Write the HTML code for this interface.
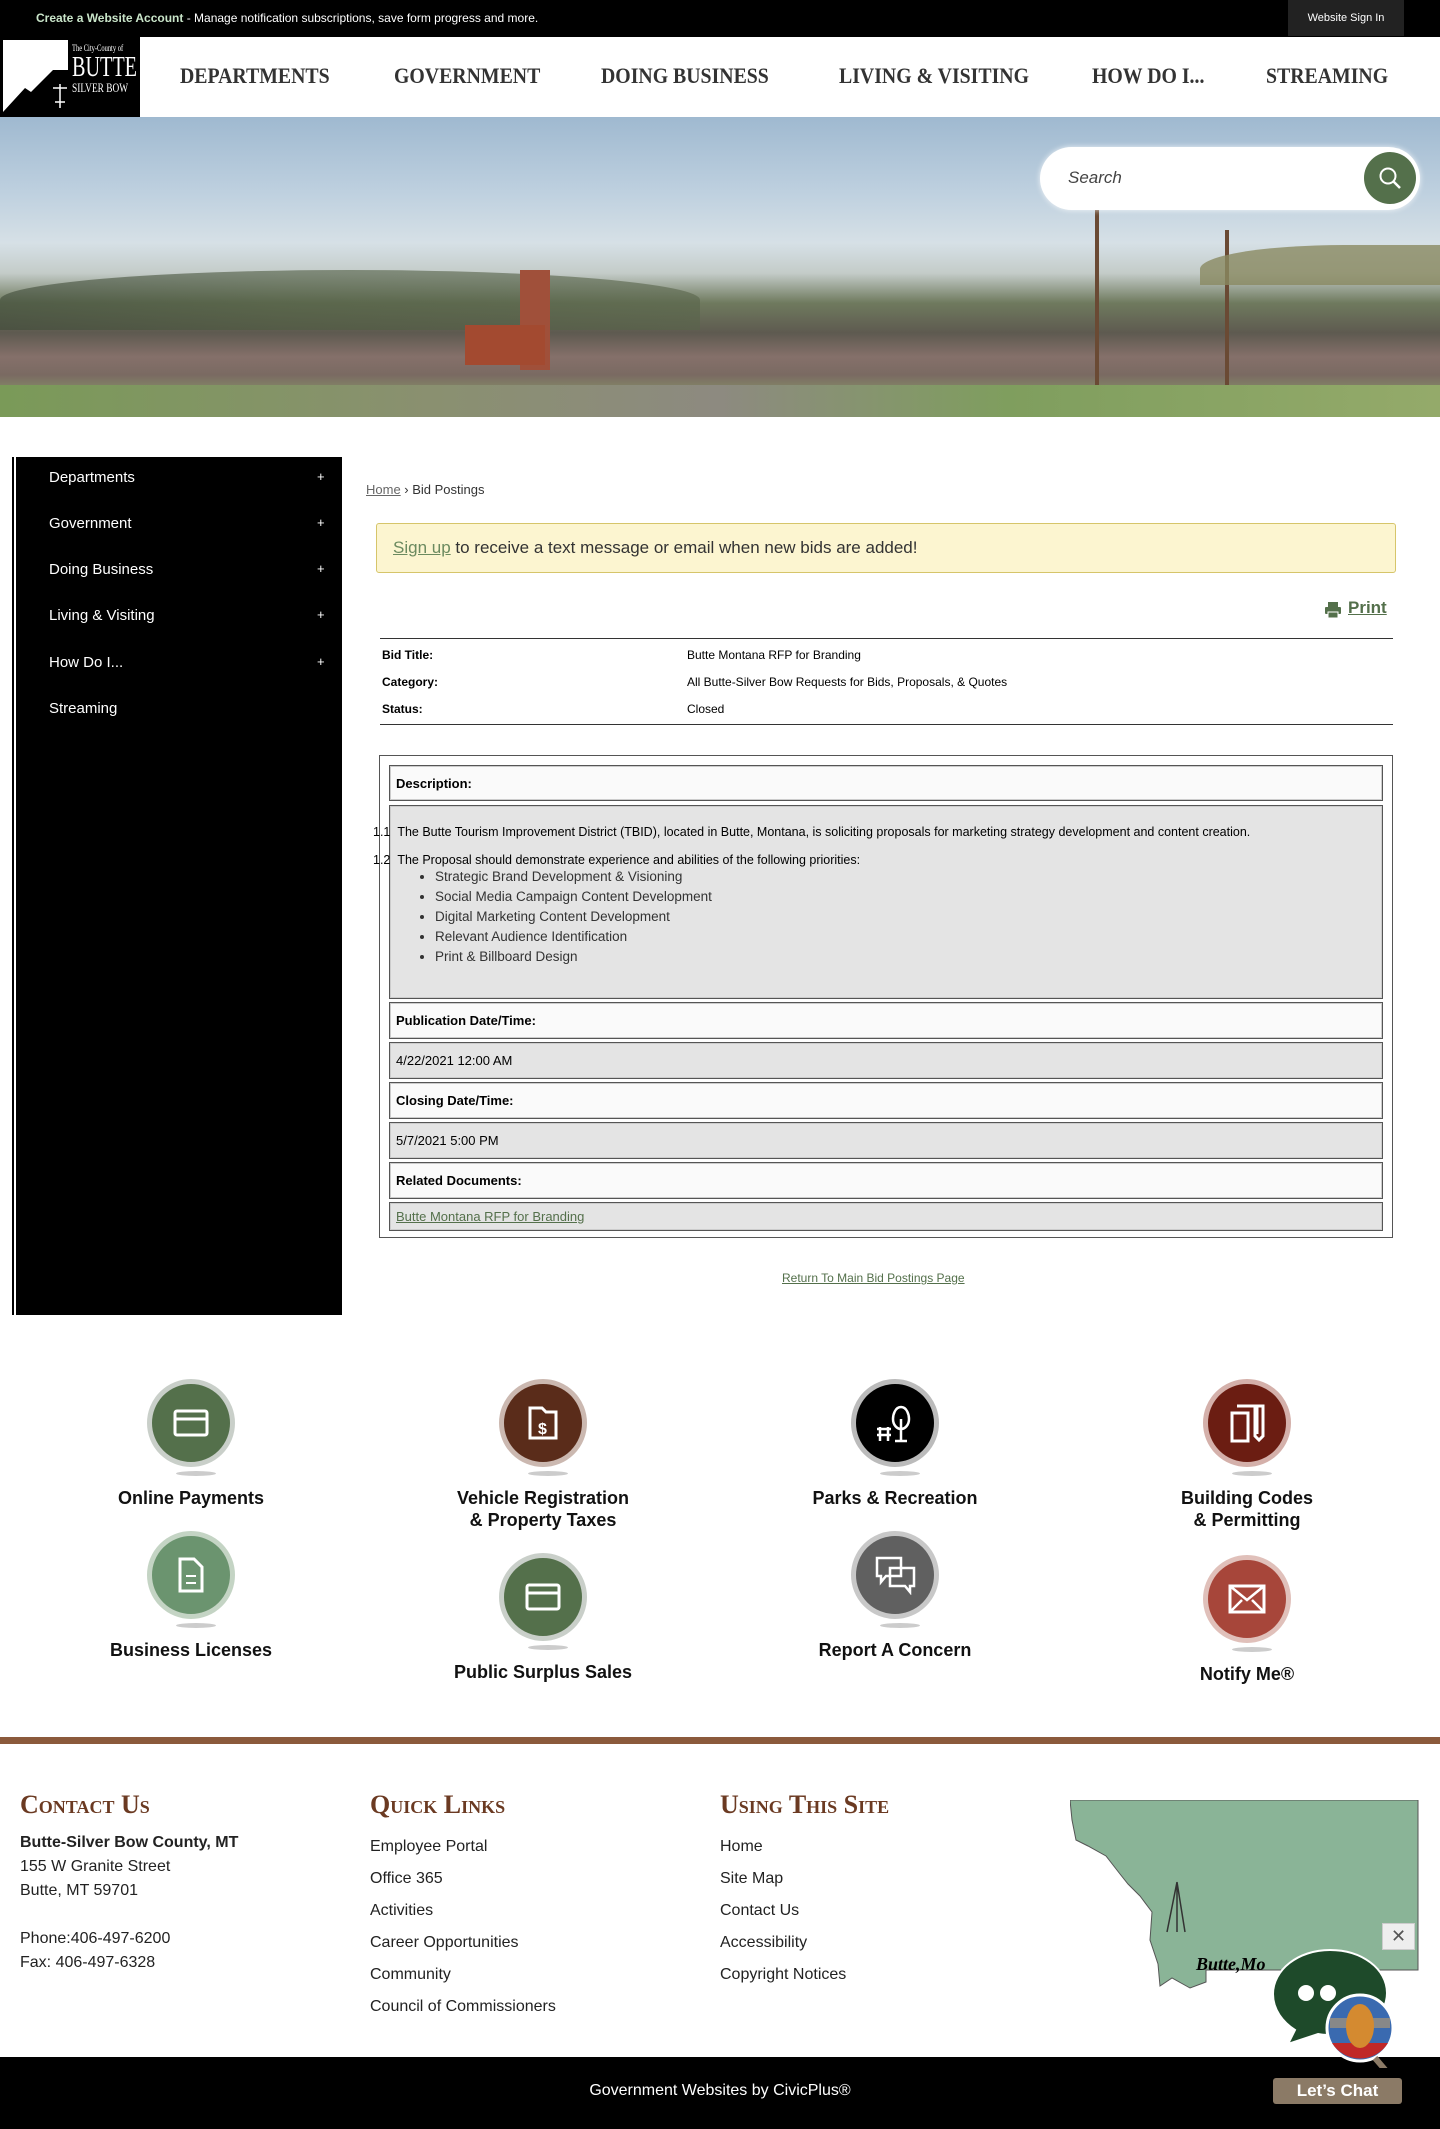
<!DOCTYPE html>
<html><head><meta charset="utf-8"><style>
*{margin:0;padding:0;box-sizing:border-box}
body{width:1440px;height:2129px;position:relative;font-family:"Liberation Sans",sans-serif;background:#fff;overflow:hidden;color:#000}
.a{position:absolute}
.nav{font-family:"Liberation Serif",serif;font-weight:bold;font-size:22px;color:#333;top:63px;transform:scaleX(.9);transform-origin:left}
.side{left:49px;color:#fff;font-size:15px}
.plus{left:317px;color:#fff;font-size:13px}
.box{position:absolute;left:389px;width:994px;border:1px solid #555;box-shadow:inset 0 0 0 1px #ccc;font-size:13px;padding-left:6px;display:flex;align-items:center}
.w{background:#fafafa}.g{background:#e4e4e4}
.ic{position:absolute;width:88px;height:88px;border-radius:50%;border:5px solid #c9cfc9;display:flex;align-items:center;justify-content:center}
.ic:after{content:"";position:absolute;bottom:-14px;left:24px;width:40px;height:5px;border-radius:50%;background:#ccc}
.lab{position:absolute;width:300px;text-align:center;font-weight:bold;font-size:18px;color:#111;line-height:22px}
.fh{font-family:"Liberation Serif",serif;font-weight:bold;font-variant:small-caps;font-size:26px;color:#6b3a22;top:1790px}
.fl{font-size:16px;color:#222;line-height:32px}
.lg{position:absolute;left:72px;color:#fff;font-family:"Liberation Serif",serif;line-height:1;white-space:nowrap;transform-origin:left;transform:scaleX(.72)}
</style></head><body>
<!-- top bar -->
<div class="a" style="left:0;top:0;width:1440px;height:37px;background:#000"></div>
<div class="a" style="left:36px;top:11px;font-size:12px;color:#fff"><b style="color:#c9e5c9">Create a Website Account</b> - Manage notification subscriptions, save form progress and more.</div>
<div class="a" style="left:1288px;top:0;width:116px;height:36px;background:#222;color:#fff;font-size:11px;text-align:center;line-height:36px">Website Sign In</div>
<!-- nav -->
<div class="a" style="left:0;top:37px;width:1440px;height:80px;background:#fff;box-shadow:0 2px 4px rgba(0,0,0,.3)"></div>
<div class="a" style="left:0;top:37px;width:140px;height:80px;background:#000"></div>
<svg class="a" style="left:3px;top:40px" width="66" height="76"><polygon points="0,0 65,0 65,30 50,30 28,52 22,48 0,72" fill="#fff"/><path d="M50 48h14M52 62h10M57 44v24" stroke="#fff" stroke-width="1.5"/></svg>
<div class="lg" style="top:44px;font-size:9px">The City-County of</div>
<div class="lg" style="top:54px;font-size:28px">BUTTE</div>
<div class="lg" style="top:81px;font-size:13px">SILVER BOW</div>
<div class="a nav" style="left:180px">DEPARTMENTS</div>
<div class="a nav" style="left:394px">GOVERNMENT</div>
<div class="a nav" style="left:601px">DOING BUSINESS</div>
<div class="a nav" style="left:839px">LIVING &amp; VISITING</div>
<div class="a nav" style="left:1092px">HOW DO I...</div>
<div class="a nav" style="left:1266px">STREAMING</div>
<!-- hero -->
<div class="a" style="left:0;top:117px;width:1440px;height:300px;background:linear-gradient(180deg,#9fb9d0 0%,#bed0df 25%,#d6e0e6 42%,#c4ccc9 52%,#6f7a5e 62%,#5e5a50 72%,#85706a 80%,#7a6a62 86%,#8a9a6a 94%,#7d9a58 100%)"></div>
<div class="a" style="left:0;top:270px;width:700px;height:60px;background:linear-gradient(90deg,#3e4a38,#4d5a40 40%,#58644a);opacity:.6;border-radius:50% 50% 0 0"></div>
<div class="a" style="left:520px;top:270px;width:30px;height:100px;background:#a0503a"></div>
<div class="a" style="left:465px;top:325px;width:80px;height:40px;background:#a34a30"></div>
<div class="a" style="left:1095px;top:210px;width:4px;height:190px;background:#6a4a34"></div>
<div class="a" style="left:1225px;top:230px;width:4px;height:170px;background:#6a4a34"></div>
<div class="a" style="left:1200px;top:245px;width:240px;height:40px;background:#8a8a62;border-radius:60% 0 0 0;opacity:.8"></div>
<div class="a" style="left:0;top:385px;width:1440px;height:32px;background:linear-gradient(90deg,#7a9a58,#8a9070 30%,#8d8a80 50%,#7f9e5e 70%,#94aa6a)"></div>
<div class="a" style="left:1040px;top:147px;width:380px;height:63px;background:#fff;border-radius:32px;box-shadow:0 0 6px rgba(255,255,255,.8)"></div>
<div class="a" style="left:1068px;top:168px;font-size:17px;font-style:italic;color:#444">Search</div>
<div class="a" style="left:1364px;top:152px;width:52px;height:52px;border-radius:50%;background:#54704b"></div>
<svg class="a" style="left:1378px;top:166px" width="24" height="24"><circle cx="10" cy="10" r="7.5" stroke="#fff" stroke-width="2" fill="none"/><line x1="15.5" y1="15.5" x2="22" y2="22" stroke="#fff" stroke-width="2.5"/></svg>
<!-- sidebar -->
<div class="a" style="left:16px;top:457px;width:326px;height:858px;background:#000;border-left:3px solid #000;box-shadow:-2px 0 0 #fff,-4px 0 0 #000"></div>
<div class="a side" style="top:469px">Departments</div><div class="a plus" style="top:469px">+</div>
<div class="a side" style="top:515px">Government</div><div class="a plus" style="top:515px">+</div>
<div class="a side" style="top:561px">Doing Business</div><div class="a plus" style="top:561px">+</div>
<div class="a side" style="top:607px">Living &amp; Visiting</div><div class="a plus" style="top:607px">+</div>
<div class="a side" style="top:654px">How Do I...</div><div class="a plus" style="top:654px">+</div>
<div class="a side" style="top:700px">Streaming</div>
<!-- content -->
<div class="a" style="left:366px;top:482px;font-size:13px;color:#333"><span style="text-decoration:underline;color:#666">Home</span> › Bid Postings</div>
<div class="a" style="left:376px;top:523px;width:1020px;height:50px;background:#fcf5d0;border:1px solid #d6c56a;border-radius:3px;font-size:17px;color:#333;padding:14px 16px"><span style="text-decoration:underline;color:#6b8a5f">Sign up</span> to receive a text message or email when new bids are added!</div>
<svg class="a" style="left:1324px;top:601px" width="18" height="18"><rect x="4" y="1" width="10" height="5" fill="#54704b"/><rect x="1" y="6" width="16" height="7" rx="1" fill="#54704b"/><rect x="4" y="11" width="10" height="6" fill="#54704b" stroke="#fff" stroke-width="1"/></svg>
<div class="a" style="left:1348px;top:598px;font-size:17px;font-weight:bold;color:#54704b;text-decoration:underline">Print</div>
<div class="a" style="left:380px;top:638px;width:1013px;height:1px;background:#333"></div>
<div class="a" style="left:380px;top:724px;width:1013px;height:1px;background:#333"></div>
<div class="a" style="left:382px;top:648px;font-size:12px;font-weight:bold">Bid Title:</div><div class="a" style="left:687px;top:648px;font-size:12px">Butte Montana RFP for Branding</div>
<div class="a" style="left:382px;top:675px;font-size:12px;font-weight:bold">Category:</div><div class="a" style="left:687px;top:675px;font-size:12px">All Butte-Silver Bow Requests for Bids, Proposals, &amp; Quotes</div>
<div class="a" style="left:382px;top:702px;font-size:12px;font-weight:bold">Status:</div><div class="a" style="left:687px;top:702px;font-size:12px">Closed</div>
<div class="a" style="left:379px;top:755px;width:1014px;height:483px;border:1px solid #555"></div>
<div class="box w" style="top:765px;height:36px;font-weight:bold">Description:</div>
<div class="box g" style="top:805px;height:194px"></div>
<div class="a" style="left:373px;top:825px;font-size:12.5px">1.1&nbsp;&nbsp;The Butte Tourism Improvement District (TBID), located in Butte, Montana, is soliciting proposals for marketing strategy development and content creation.</div>
<div class="a" style="left:373px;top:853px;font-size:12.5px">1.2&nbsp;&nbsp;The Proposal should demonstrate experience and abilities of the following priorities:</div>
<ul class="a" style="left:435px;top:867px;font-size:13.5px;color:#333;line-height:20px">
<li>Strategic Brand Development &amp; Visioning</li><li>Social Media Campaign Content Development</li><li>Digital Marketing Content Development</li><li>Relevant Audience Identification</li><li>Print &amp; Billboard Design</li></ul>
<div class="box w" style="top:1002px;height:37px;font-weight:bold">Publication Date/Time:</div>
<div class="box g" style="top:1042px;height:37px">4/22/2021 12:00 AM</div>
<div class="box w" style="top:1082px;height:37px;font-weight:bold">Closing Date/Time:</div>
<div class="box g" style="top:1122px;height:37px">5/7/2021 5:00 PM</div>
<div class="box w" style="top:1162px;height:37px;font-weight:bold">Related Documents:</div>
<div class="box g" style="top:1202px;height:29px;color:#54704b;text-decoration:underline">Butte Montana RFP for Branding</div>
<div class="a" style="left:782px;top:1271px;font-size:12px;color:#54704b;text-decoration:underline">Return To Main Bid Postings Page</div>
<!-- icons -->
<div class="ic" style="left:147px;top:1379px;background:#54704b"><svg width="36" height="28"><rect x="2" y="2" width="32" height="24" rx="2" fill="none" stroke="#fff" stroke-width="3"/><line x1="2" y1="10" x2="34" y2="10" stroke="#fff" stroke-width="3"/></svg></div>
<div class="lab" style="left:41px;top:1487px">Online Payments</div>
<div class="ic" style="left:499px;top:1379px;background:#5a2c1a;border-color:#cbb8b0"><svg width="32" height="36"><path d="M3 3h12l4 4h10v26H3z" fill="none" stroke="#fff" stroke-width="3"/><text x="11" y="29" fill="#fff" font-size="16" font-weight="bold" font-family="Liberation Sans">$</text></svg></div>
<div class="lab" style="left:393px;top:1487px">Vehicle Registration<br>&amp; Property Taxes</div>
<div class="ic" style="left:851px;top:1379px;background:#000;border-color:#bbb"><svg width="44" height="40"><path d="M28 4c-6 0-8 8-8 12 0 6 4 10 8 10s8-4 8-10c0-4-2-12-8-12zM28 16v22M22 38h12M4 26h14M4 32h14M7 24v14M15 24v14" fill="none" stroke="#fff" stroke-width="2.5"/></svg></div>
<div class="lab" style="left:745px;top:1487px">Parks &amp; Recreation</div>
<div class="ic" style="left:1203px;top:1379px;background:#6b1d12;border-color:#d4b0aa"><svg width="36" height="40"><path d="M3 10h16v28H3zM8 3h20v28M26 3v30l4 4 4-4V3z" fill="none" stroke="#fff" stroke-width="3"/></svg></div>
<div class="lab" style="left:1097px;top:1487px">Building Codes<br>&amp; Permitting</div>
<div class="ic" style="left:147px;top:1531px;background:#6b946f;border-color:#c4d4c4"><svg width="28" height="38"><path d="M3 3h14l8 8v24H3z" fill="none" stroke="#fff" stroke-width="3"/><path d="M9 20h10M9 27h10" stroke="#fff" stroke-width="2"/></svg></div>
<div class="lab" style="left:41px;top:1639px">Business Licenses</div>
<div class="ic" style="left:499px;top:1553px;background:#54704b"><svg width="36" height="28"><rect x="2" y="2" width="32" height="24" rx="2" fill="none" stroke="#fff" stroke-width="3"/><line x1="2" y1="10" x2="34" y2="10" stroke="#fff" stroke-width="3"/></svg></div>
<div class="lab" style="left:393px;top:1661px">Public Surplus Sales</div>
<div class="ic" style="left:851px;top:1531px;background:#606060;border-color:#c8c8c8"><svg width="42" height="40"><path d="M3 3h24v18H12l-5 6v-6H3zM16 13h24v18h-4v6l-5-6H16z" fill="none" stroke="#fff" stroke-width="2.5"/></svg></div>
<div class="lab" style="left:745px;top:1639px">Report A Concern</div>
<div class="ic" style="left:1203px;top:1555px;background:#a7463a;border-color:#e0c0ba"><svg width="38" height="30"><rect x="2" y="2" width="34" height="26" fill="none" stroke="#fff" stroke-width="3"/><path d="M2 2l17 14 17-14M2 28l12-12M36 28l-12-12" fill="none" stroke="#fff" stroke-width="2.5"/></svg></div>
<div class="lab" style="left:1097px;top:1663px">Notify Me®</div>
<!-- footer -->
<div class="a" style="left:0;top:1737px;width:1440px;height:7px;background:#8b5a3c"></div>
<div class="a fh" style="left:20px">Contact Us</div>
<div class="a fh" style="left:370px">Quick Links</div>
<div class="a fh" style="left:720px">Using This Site</div>
<div class="a fl" style="left:20px;top:1831px;line-height:24px"><b>Butte-Silver Bow County, MT</b><br>155 W Granite Street<br>Butte, MT 59701<br><br>Phone:406-497-6200<br>Fax: 406-497-6328</div>
<div class="a fl" style="left:370px;top:1831px;line-height:32px">Employee Portal<br>Office 365<br>Activities<br>Career Opportunities<br>Community<br>Council of Commissioners</div>
<div class="a fl" style="left:720px;top:1831px;line-height:32px">Home<br>Site Map<br>Contact Us<br>Accessibility<br>Copyright Notices</div>
<svg class="a" style="left:1070px;top:1800px" width="350" height="190"><path d="M0 0H348V170H136V182L120 188 102 178 90 186 88 164 80 140 82 112 70 96 58 84 50 74 36 56 18 46 6 40 2 20z" fill="#8ab497" stroke="#555"/><path d="M107 82l-10 50M107 82l8 50M107 82v50" stroke="#333" stroke-width="1.5"/><text x="126" y="170" font-family="Liberation Serif" font-style="italic" font-weight="bold" font-size="18">Butte,Mo</text></svg>
<div class="a" style="left:1382px;top:1923px;width:33px;height:27px;background:#eee;border:1px solid #ccc;text-align:center;font-size:18px;line-height:25px;color:#555">✕</div>
<!-- bottom -->
<div class="a" style="left:0;top:2057px;width:1440px;height:72px;background:#000"></div>
<div class="a" style="left:0;top:2082px;width:1440px;text-align:center;color:#fff;font-size:16px">Government Websites by CivicPlus®</div>
<svg class="a" style="left:1270px;top:1948px" width="130" height="120"><path d="M60 2C28 2 3 22 3 46c0 16 10 28 22 36L18 96l30-10c4 1 8 1 12 1 32 0 57-18 57-42S92 2 60 2z" fill="#1e4a2a" stroke="#fff" stroke-width="2"/><circle cx="36" cy="45" r="8" fill="#fff"/><circle cx="58" cy="45" r="8" fill="#fff"/><circle cx="90" cy="80" r="33" fill="#3a6ab0" stroke="#fff" stroke-width="3"/><path d="M60 70h60v10H60z" fill="#888"/><path d="M62 95h56a33 33 0 0 1-56 0z" fill="#c02828"/><ellipse cx="90" cy="78" rx="14" ry="22" fill="#d48a30"/><path d="M105 110l12 14" stroke="#8b7a66" stroke-width="6"/></svg>
<div class="a" style="left:1273px;top:2078px;width:129px;height:26px;background:#8b7a66;border-radius:3px;color:#fff;font-size:17px;font-weight:bold;text-align:center;line-height:26px">Let’s Chat</div>
</body></html>
